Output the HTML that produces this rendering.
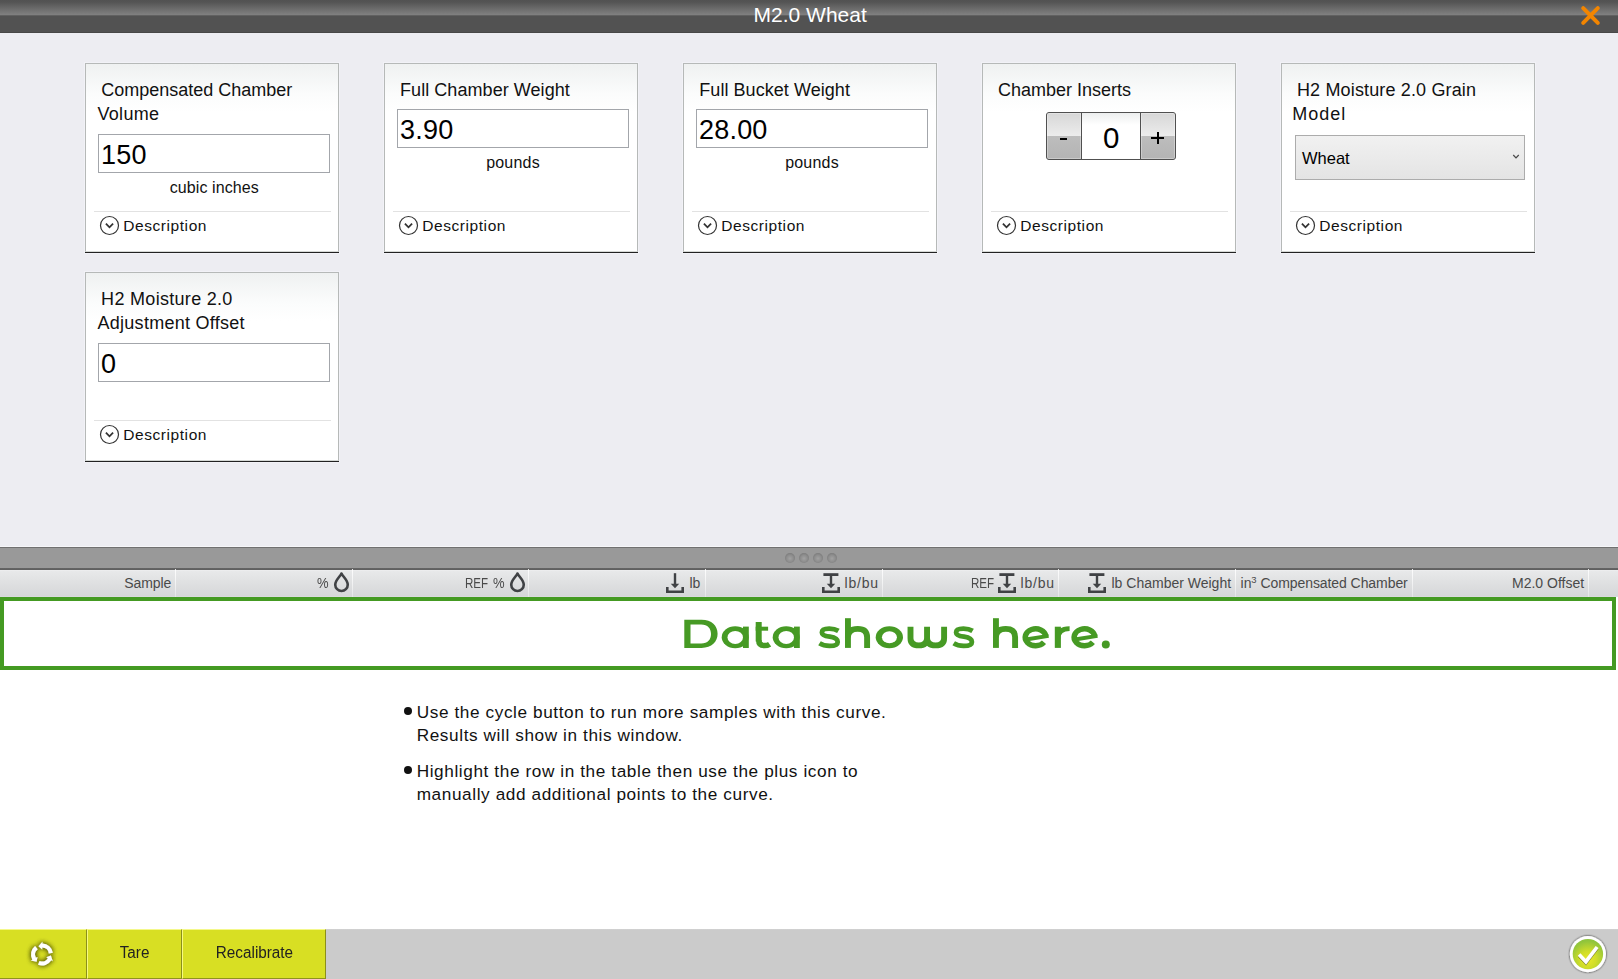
<!DOCTYPE html>
<html><head><meta charset="utf-8"><title>M2.0 Wheat</title>
<style>
*{box-sizing:border-box;margin:0;padding:0}
html,body{width:1618px;height:979px;overflow:hidden}
body{position:relative;background:#ededf2;font-family:"Liberation Sans",sans-serif;color:#000}
.abs{position:absolute}
#hdr{position:absolute;left:0;top:0;width:1618px;height:33px;background:linear-gradient(#525252 0,#545454 2px,#7f7f7f 14.5px,#6a6a6a 15.2px,#525252 16px,#525252 32px,#484848 32px,#484848 33px)}
#title{position:absolute;left:0;top:0;width:1618px;text-align:center;color:#fff;font-size:21px;line-height:33px;white-space:nowrap}
#title span{position:relative;left:1.2px;top:-2.3px}
#closex{position:absolute;left:1576px;top:1px}
.card{position:absolute;width:254px;height:189px;border:1px solid #b6b9b8;border-bottom:1px solid #d6d9d6;box-shadow:0 0 0 1px #f2f2f7,0 1px 0 1px #f2f2f7;background:linear-gradient(#eff1f1 0,#fbfcfc 30px,#fff 48px)}
.card:after{content:"";position:absolute;left:-1px;top:100%;margin-top:1px;width:254px;height:1px;background:#222}
.ct{position:absolute;left:10.5px;font-size:18px;line-height:24px;white-space:pre;color:#111}
.ct.l0{top:14px}
.ct.l1{top:38px}
.ct.pl{left:15px}
.inp{position:absolute;left:12px;width:232px;height:39px;border:1px solid #a3a6ab;background:#fff;font-size:27px;line-height:39px;padding-left:2px;letter-spacing:0.2px;white-space:nowrap}
.inp span{position:relative;top:1px}
.unit{position:absolute;left:12px;width:232px;text-align:center;font-size:16px;letter-spacing:0.2px;line-height:30px;white-space:nowrap;color:#111}
.sep{position:absolute;left:8px;top:147px;width:237px;height:1px;background:#e2e2e2}
.dico{position:absolute;left:13px;top:151px}
.desc{position:absolute;left:37.3px;top:152.3px;font-size:15.5px;letter-spacing:0.56px;line-height:20px;white-space:nowrap;color:#111}
.spin{position:absolute;left:63px;top:48px;width:130px;height:48px;border:1px solid #505050;border-radius:3px;background:#505050;overflow:hidden}
.sb{position:absolute;top:0;width:34px;height:46px;background:linear-gradient(#d7d7d7 0,#ececec 23px,#bdbdbd 23px,#b4b4b4 46px)}
.sb i{position:absolute;left:0;top:0;right:0;bottom:0;border:1px solid rgba(255,255,255,.3)}
.sl{left:0}
.sr{left:94px}
.sb b{position:absolute;background:#000}
.sv{position:absolute;left:35px;top:0;width:58px;height:46px;background:linear-gradient(#eceeee 0,#fff 12px);text-align:center;font-size:29.5px;line-height:48px}
.sv span{position:relative;left:0.3px;top:1px}
.sel{position:absolute;left:13px;top:71px;width:230px;height:45px;border:1px solid #acacac;background:linear-gradient(#f1f1f1,#e4e4e4);font-size:16.5px;line-height:45px;padding-left:6px;white-space:nowrap}
.chev{position:absolute;left:215px;top:17px}
#split{position:absolute;left:0;top:546px;width:1618px;height:24px;background:linear-gradient(#f6f6f9 0,#f6f6f9 1px,#707070 1px,#707070 2px,#999 2px,#999 21.6px,#646464 22.4px,#5e5e5e 24px)}
.dot{position:absolute;top:553px;width:10px;height:10px;border-radius:50%;background:radial-gradient(circle at 50% 55%,#a2a2a2 0,#8e8e8e 45%,#787878 80%,#747474 100%)}
#thead{position:absolute;left:0;top:570px;width:1618px;height:27px;background:linear-gradient(#f1f1f2 0,#e8e9ea 1px,#dfe0e1 13px,#d6d7d9 26px,#dddde0 27px)}
.cs{position:absolute;top:569px;width:1px;height:28px;background:linear-gradient(rgba(255,255,255,.85),rgba(255,255,255,.35))}
.th{position:absolute;top:574px;font-size:14px;line-height:18px;color:#4a4a4a;white-space:pre}
.ico{position:absolute;top:570px}
#gbox{position:absolute;left:0;top:597px;width:1616px;height:73px;border:4px solid #449a22;background:#fff}
#white{position:absolute;left:0;top:597px;width:1618px;height:332px;background:#fff}
.bl{position:absolute;left:416.7px;font-size:17.2px;letter-spacing:0.6px;line-height:24px;white-space:nowrap;color:#111}
.bul{position:absolute;left:404px;width:8px;height:8px;border-radius:50%;background:#111}
#tb{position:absolute;left:0;top:929px;width:1618px;height:50px;background:linear-gradient(#d4d4d4 0,#cbcbcb 1px,#cbcbcb 100%)}
.yb{position:absolute;top:929px;height:50px;background:#d8df23;border-top:1px solid #f4f88a;border-left:1px solid #f7fa80;border-right:1px solid #8b8f1a;border-bottom:1px solid #8f931c;text-align:center;font-size:16px;line-height:46.8px;color:#222;white-space:nowrap}
.yb span{display:inline-block;transform:scaleX(0.955)}

</style></head>
<body>
<div id="hdr"></div>
<div id="title"><span id="ttl">M2.0 Wheat</span></div>
<svg id="closex" width="30" height="30" viewBox="0 0 30 30"><path d="M7.2 7.2 L21.8 21.8 M21.8 7.2 L7.2 21.8" stroke="#f28500" stroke-width="4" stroke-linecap="round" fill="none"/></svg>
<div class="card" style="left:85px;top:63px">
<div class="ct l0 " id="c0t0" style="margin-left:-0.3px;letter-spacing:0px"> Compensated Chamber</div>
<div class="ct l1 " id="c0t1" style="margin-left:1px;letter-spacing:0.3px">Volume</div>
<div class="inp" style="top:70px"><span id="c0v">150</span></div>
<div class="unit" style="top:109px;letter-spacing:0.08px;padding-left:0.6px" id="c0u">cubic inches</div>
<div class="sep"></div>
<svg class="dico" width="21" height="21" viewBox="0 0 21 21"><circle cx="10.5" cy="10.5" r="9" fill="none" stroke="#333" stroke-width="1.2"/><path d="M6.9 8.6 L10.5 12.3 L14.1 8.6" fill="none" stroke="#333" stroke-width="1.8"/></svg>
<div class="desc" id="c0d">Description</div>
</div>
<div class="card" style="left:384px;top:63px">
<div class="ct l0 pl" id="c1t0" style="margin-left:0px;letter-spacing:0.06px">Full Chamber Weight</div>
<div class="inp" style="top:45px"><span id="c1v">3.90</span></div>
<div class="unit" style="top:84px" id="c1u">pounds</div>
<div class="sep"></div>
<svg class="dico" width="21" height="21" viewBox="0 0 21 21"><circle cx="10.5" cy="10.5" r="9" fill="none" stroke="#333" stroke-width="1.2"/><path d="M6.9 8.6 L10.5 12.3 L14.1 8.6" fill="none" stroke="#333" stroke-width="1.8"/></svg>
<div class="desc" id="c1d">Description</div>
</div>
<div class="card" style="left:683px;top:63px">
<div class="ct l0 pl" id="c2t0" style="margin-left:0.3px;letter-spacing:0.05px">Full Bucket Weight</div>
<div class="inp" style="top:45px"><span id="c2v">28.00</span></div>
<div class="unit" style="top:84px" id="c2u">pounds</div>
<div class="sep"></div>
<svg class="dico" width="21" height="21" viewBox="0 0 21 21"><circle cx="10.5" cy="10.5" r="9" fill="none" stroke="#333" stroke-width="1.2"/><path d="M6.9 8.6 L10.5 12.3 L14.1 8.6" fill="none" stroke="#333" stroke-width="1.8"/></svg>
<div class="desc" id="c2d">Description</div>
</div>
<div class="card" style="left:982px;top:63px">
<div class="ct l0 pl" id="c3t0">Chamber Inserts</div>
<div class="spin">
<div class="sb sl"><i></i><b style="left:13px;top:25px;width:7px;height:2px"></b></div>
<div class="sv"><span id="spv">0</span></div>
<div class="sb sr"><i></i><b style="left:10px;top:24px;width:13px;height:2px"></b><b style="left:15.5px;top:19px;width:2px;height:12px"></b></div>
</div>
<div class="sep"></div>
<svg class="dico" width="21" height="21" viewBox="0 0 21 21"><circle cx="10.5" cy="10.5" r="9" fill="none" stroke="#333" stroke-width="1.2"/><path d="M6.9 8.6 L10.5 12.3 L14.1 8.6" fill="none" stroke="#333" stroke-width="1.8"/></svg>
<div class="desc" id="c3d">Description</div>
</div>
<div class="card" style="left:1281px;top:63px">
<div class="ct l0 " id="c4t0" style="margin-left:-0.7px;letter-spacing:0.15px"> H2 Moisture 2.0 Grain</div>
<div class="ct l1 " id="c4t1" style="margin-left:-0.2px;letter-spacing:1.0px">Model</div>
<div class="sel"><span id="selv">Wheat</span>
<svg class="chev" width="10" height="8" viewBox="0 0 10 8"><path d="M2.25 2 L5 4.9 L7.75 2" fill="none" stroke="#4a4a4a" stroke-width="1.25"/></svg>
</div>
<div class="sep"></div>
<svg class="dico" width="21" height="21" viewBox="0 0 21 21"><circle cx="10.5" cy="10.5" r="9" fill="none" stroke="#333" stroke-width="1.2"/><path d="M6.9 8.6 L10.5 12.3 L14.1 8.6" fill="none" stroke="#333" stroke-width="1.8"/></svg>
<div class="desc" id="c4d">Description</div>
</div>
<div class="card" style="left:85px;top:272px">
<div class="ct l0 " id="c5t0" style="margin-left:-0.7px;letter-spacing:0.3px"> H2 Moisture 2.0</div>
<div class="ct l1 " id="c5t1" style="margin-left:1px;letter-spacing:0.27px">Adjustment Offset</div>
<div class="inp" style="top:70px"><span id="c5v">0</span></div>
<div class="sep"></div>
<svg class="dico" width="21" height="21" viewBox="0 0 21 21"><circle cx="10.5" cy="10.5" r="9" fill="none" stroke="#333" stroke-width="1.2"/><path d="M6.9 8.6 L10.5 12.3 L14.1 8.6" fill="none" stroke="#333" stroke-width="1.8"/></svg>
<div class="desc" id="c5d">Description</div>
</div>
<div id="split"></div>
<div class="dot" style="left:785px"></div><div class="dot" style="left:799px"></div><div class="dot" style="left:813px"></div><div class="dot" style="left:827px"></div>
<div id="thead"></div>
<div class="cs" style="left:175px"></div><div class="cs" style="left:352px"></div><div class="cs" style="left:528px"></div><div class="cs" style="left:705px"></div><div class="cs" style="left:882px"></div><div class="cs" style="left:1058px"></div><div class="cs" style="left:1235px"></div><div class="cs" style="left:1412px"></div><div class="cs" style="left:1588px"></div>
<div class="th" style="left:124.3px;letter-spacing:-0.1px" id="h1">Sample</div>
<div class="th" style="left:316.8px;transform-origin:0 0;transform:scaleX(0.93)" id="h2">%</div>
<svg class="ico" style="left:332px" width="20" height="26" viewBox="0 0 20 26"><path d="M9.5 3.5 C8.4 6.2 3.25 10.2 3.25 14.7 A6.25 6.25 0 0 0 15.75 14.7 C15.75 10.2 10.6 6.2 9.5 3.5 Z" fill="none" stroke="#404245" stroke-width="2.6" stroke-linejoin="round"/></svg>
<div class="th" style="left:465px;transform-origin:0 0;transform:scaleX(0.825)" id="h3a">REF</div>
<div class="th" style="left:493.4px;transform-origin:0 0;transform:scaleX(0.93)" id="h3b">%</div>
<svg class="ico" style="left:508px" width="20" height="26" viewBox="0 0 20 26"><path d="M9.5 3.5 C8.4 6.2 3.25 10.2 3.25 14.7 A6.25 6.25 0 0 0 15.75 14.7 C15.75 10.2 10.6 6.2 9.5 3.5 Z" fill="none" stroke="#404245" stroke-width="2.6" stroke-linejoin="round"/></svg>
<svg class="ico" style="left:664px" width="22" height="26" viewBox="0 0 22 26"><path d="M3.3 17 V21.7 H18.7 V17" fill="none" stroke="#404245" stroke-width="2.6"/><path d="M11 3.2 V15" stroke="#404245" stroke-width="2.4" fill="none"/><path d="M6.8 13.8 H15.2 L11 18.3 Z" fill="#404245"/></svg>
<div class="th" style="left:689.5px" id="h4">lb</div>
<svg class="ico" style="left:820px" width="22" height="26" viewBox="0 0 22 26"><path d="M3.3 17 V21.7 H18.7 V17" fill="none" stroke="#404245" stroke-width="2.6"/><path d="M11 4.5 V15" stroke="#404245" stroke-width="2.4" fill="none"/><path d="M3.4 4.6 H18.4" stroke="#404245" stroke-width="2.8" fill="none"/><path d="M6.8 13.8 H15.2 L11 18.3 Z" fill="#404245"/></svg>
<div class="th" style="left:844.6px;letter-spacing:0.75px" id="h5">lb/bu</div>
<div class="th" style="left:971px;transform-origin:0 0;transform:scaleX(0.825)" id="h6a">REF</div>
<svg class="ico" style="left:996px" width="22" height="26" viewBox="0 0 22 26"><path d="M3.3 17 V21.7 H18.7 V17" fill="none" stroke="#404245" stroke-width="2.6"/><path d="M11 4.5 V15" stroke="#404245" stroke-width="2.4" fill="none"/><path d="M3.4 4.6 H18.4" stroke="#404245" stroke-width="2.8" fill="none"/><path d="M6.8 13.8 H15.2 L11 18.3 Z" fill="#404245"/></svg>
<div class="th" style="left:1020.6px;letter-spacing:0.75px" id="h6b">lb/bu</div>
<svg class="ico" style="left:1086px" width="22" height="26" viewBox="0 0 22 26"><path d="M3.3 17 V21.7 H18.7 V17" fill="none" stroke="#404245" stroke-width="2.6"/><path d="M11 4.5 V15" stroke="#404245" stroke-width="2.4" fill="none"/><path d="M3.4 4.6 H18.4" stroke="#404245" stroke-width="2.8" fill="none"/><path d="M6.8 13.8 H15.2 L11 18.3 Z" fill="#404245"/></svg>
<div class="th" style="left:1111.5px" id="h7">lb Chamber Weight</div>
<div class="th" style="left:1240.6px;letter-spacing:-0.07px" id="h8">in<span style="font-size:9.5px;position:relative;top:-5.5px">3</span> Compensated Chamber</div>
<div class="th" style="left:1512px" id="h9">M2.0 Offset</div>
<div id="white"></div>
<div id="gbox"></div>
<svg id="dsh" class="abs" style="left:670px;top:610px" width="460" height="50" viewBox="670 610 460 50" fill="#469a24"><path fill-rule="evenodd" d="M684.3 619.8 H701.5 C711.8 619.8 717.6 625.8 717.6 633.8 C717.6 641.8 711.8 647.9 701.5 647.9 H684.3 Z M690.5 624.5 V643.4 H701.2 C707.8 643.4 711 639.3 711 633.9 C711 628.5 707.8 624.5 701.2 624.5 Z"/><ellipse cx="735.2" cy="637.3" rx="13.5" ry="11"/><rect x="743" y="626.6" width="5.8" height="21.4"/><ellipse cx="735.25" cy="637.45" rx="7.75" ry="6.5" fill="#fff"/><rect x="755.7" y="622" width="6" height="19.5"/><rect x="755.7" y="626.7" width="12.4" height="4"/><path d="M758.7 640 C758.7 644 760.8 645.6 764.6 645.6 C766.6 645.6 768.3 645.1 769.6 644.2" fill="none" stroke="#469a24" stroke-width="5.5"/><ellipse cx="786.2" cy="637.3" rx="13.5" ry="11"/><rect x="794" y="626.6" width="5.8" height="21.4"/><ellipse cx="786.25" cy="637.45" rx="7.75" ry="6.5" fill="#fff"/><path d="M838.4 630.9 C835.50 629.1 832.50 628.6 829.20 628.6 C824.50 628.6 821.90 630 821.90 632.4 C821.90 635 824.80 635.9 829.80 636.7 C835.00 637.5 837.70 638.7 837.70 641.9 C837.70 644.6 834.50 645.8 829.50 645.8 C825.50 645.8 822.30 645 819.50 643.2" fill="none" stroke="#469a24" stroke-width="4.8"/><rect x="845" y="618.2" width="5.9" height="29.7"/><path d="M847.9 637.5 C847.9 631.2 852 628.9 857.7 628.9 C863.6 628.9 867.1 631.4 867.1 637.3 V647.9" fill="none" stroke="#469a24" stroke-width="5.9"/><ellipse cx="889.35" cy="637.25" rx="13.65" ry="11"/><ellipse cx="889.45" cy="637.35" rx="7.5" ry="6" fill="#fff"/><path d="M910.5 626.7 V638.3 C910.5 643.4 913.6 645.4 918.8 645.4 C924 645.4 927.05 643.4 927.05 638.3 V626.7 M927.05 638.3 C927.05 643.4 930.2 645.4 935.6 645.4 C941 645.4 944.1 643.4 944.1 638.3 V626.7" fill="none" stroke="#469a24" stroke-width="5.9"/><path d="M972.5999999999999 630.9 C969.70 629.1 966.70 628.6 963.40 628.6 C958.70 628.6 956.10 630 956.10 632.4 C956.10 635 959.00 635.9 964.00 636.7 C969.20 637.5 971.90 638.7 971.90 641.9 C971.90 644.6 968.70 645.8 963.70 645.8 C959.70 645.8 956.50 645 953.70 643.2" fill="none" stroke="#469a24" stroke-width="4.8"/><rect x="993" y="618.2" width="5.9" height="29.7"/><path d="M995.9 637.5 C995.9 631.2 1000 628.9 1005.7 628.9 C1011.6 628.9 1015.1 631.4 1015.1 637.3 V647.9" fill="none" stroke="#469a24" stroke-width="5.9"/><path d="M1045.87 636.27 A10.35 8.45 0 1 0 1043.97 642.27" fill="none" stroke="#469a24" stroke-width="5.5"/><path d="M1027.5 639.3 L1048.6 635.9" fill="none" stroke="#469a24" stroke-width="3.9"/><rect x="1054.8" y="626.7" width="6.1" height="21.2"/><path d="M1057.9 639 C1057.9 632 1062 628.6 1069.6 628.6" fill="none" stroke="#469a24" stroke-width="4.6"/><path d="M1094.77 636.27 A10.35 8.45 0 1 0 1092.87 642.27" fill="none" stroke="#469a24" stroke-width="5.5"/><path d="M1076.4 639.3 L1097.5 635.9" fill="none" stroke="#469a24" stroke-width="3.9"/><circle cx="1105.8" cy="644.5" r="4"/></svg>

<div class="bul" style="top:706.6px"></div>
<div class="bl" style="top:699.5px" id="b1">Use the cycle button to run more samples with this curve.</div>
<div class="bl" style="top:723.1px" id="b2">Results will show in this window.</div>
<div class="bul" style="top:765.6px"></div>
<div class="bl" style="top:758.5px" id="b3">Highlight the row in the table then use the plus icon to</div>
<div class="bl" style="top:782.1px" id="b4">manually add additional points to the curve.</div>
<div id="tb"></div>
<div class="yb" style="left:0;width:87px;border-left:none"></div>
<div class="yb" style="left:87px;width:95px"><span id="tare">Tare</span></div>
<div class="yb" style="left:182px;width:144px"><span id="recal">Recalibrate</span></div>
<svg class="abs" style="left:22px;top:934px;overflow:visible" width="40" height="40" viewBox="0 0 40 40" id="cyc"><defs><filter id="gs" x="-40%" y="-40%" width="180%" height="180%"><feGaussianBlur in="SourceAlpha" stdDeviation="2.5" result="b"/><feFlood flood-color="#5a5e00" flood-opacity="1"/><feComposite in2="b" operator="in" result="s"/><feMerge><feMergeNode in="s"/><feMergeNode in="s"/><feMergeNode in="SourceGraphic"/></feMerge></filter></defs><path d="M30.86 18.78 A11.0 11.0 0 0 0 20.38 9.51 L20.44 7.81 L16.50 12.26 L20.18 15.40 L20.24 13.60 A6.9 6.9 0 0 1 26.82 19.42 Z M13.08 11.95 A11.0 11.0 0 0 0 10.29 25.66 L8.79 26.46 L14.61 27.65 L15.50 22.89 L13.91 23.74 A6.9 6.9 0 0 1 15.66 15.14 Z M16.06 30.77 A11.0 11.0 0 0 0 29.33 26.33 L30.77 27.23 L28.88 21.59 L24.33 23.20 L25.85 24.16 A6.9 6.9 0 0 1 17.53 26.94 Z" fill="#fff" filter="url(#gs)"/></svg>
<svg class="abs" style="left:1566px;top:932px;overflow:visible" width="44" height="44" viewBox="0 0 44 44" id="chk"><defs><radialGradient id="cg" cx="0.5" cy="0.68" r="0.62"><stop offset="0" stop-color="#e9e828"/><stop offset="0.45" stop-color="#cfdd2a"/><stop offset="1" stop-color="#8fc43c"/></radialGradient><filter id="cs" x="-30%" y="-30%" width="160%" height="160%"><feGaussianBlur in="SourceAlpha" stdDeviation="1.2" result="b"/><feOffset in="b" dx="0.1" dy="0.4" result="o"/><feComponentTransfer in="o" result="s"><feFuncA type="linear" slope="0.9"/></feComponentTransfer><feMerge><feMergeNode in="s"/><feMergeNode in="SourceGraphic"/></feMerge></filter><filter id="ks" x="-30%" y="-30%" width="160%" height="160%"><feGaussianBlur in="SourceAlpha" stdDeviation="0.7" result="b"/><feOffset in="b" dx="-0.4" dy="0.9" result="o"/><feFlood flood-color="#6a7400" flood-opacity="0.9"/><feComposite in2="o" operator="in" result="s"/><feMerge><feMergeNode in="s"/><feMergeNode in="SourceGraphic"/></feMerge></filter></defs><circle cx="21.9" cy="22.1" r="18.1" fill="#fff" filter="url(#cs)"/><circle cx="21.9" cy="22.1" r="15.2" fill="url(#cg)"/><path d="M13.1 22.6 L19.9 29.7 L31.1 15" fill="none" stroke="#fff" stroke-width="3.6" stroke-linejoin="miter" filter="url(#ks)"/></svg>
</body></html>
